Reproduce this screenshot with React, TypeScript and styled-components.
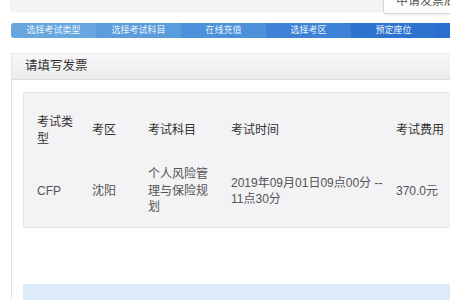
import React from "react"
import styled, { createGlobalStyle } from "styled-components"

const steps = [
  { label: "选择考试类型", color: "#67a6df" },
  { label: "选择考试科目", color: "#5a9cdc" },
  { label: "在线充值", color: "#4c90da" },
  { label: "选择考区", color: "#3d82d6" },
  { label: "预定座位", color: "#2f73d1" },
  { label: "", color: "#2b6ecf" },
]

export default function App() {
  return (
    <>
      <GlobalStyle />
      <Page>
        <TopStrip>
          <InvoiceButton>申请发票后</InvoiceButton>
        </TopStrip>
        <StepBar>
          {steps.map((s, i) => (
            <Step key={i} $color={s.color}>
              {s.label}
            </Step>
          ))}
        </StepBar>
        <Panel>
          <PanelHeader>请填写发票</PanelHeader>
          <PanelBody>
            <InfoBox>
              <Table>
                <colgroup>
                  <col style={{ width: 55 }} />
                  <col style={{ width: 56 }} />
                  <col style={{ width: 83 }} />
                  <col style={{ width: 165 }} />
                  <col />
                </colgroup>
                <thead>
                  <HeadRow>
                    <Th $pad={12}>考试类型</Th>
                    <Th>考区</Th>
                    <Th>考试科目</Th>
                    <Th>考试时间</Th>
                    <Th>考试费用</Th>
                  </HeadRow>
                </thead>
                <tbody>
                  <DataRow>
                    <Td $pad={12}>CFP</Td>
                    <Td>沈阳</Td>
                    <Td $pad={14}>个人风险管理与保险规划</Td>
                    <Td $pad={10}>2019年09月01日09点00分 -- 11点30分</Td>
                    <Td>370.0元</Td>
                  </DataRow>
                </tbody>
              </Table>
            </InfoBox>
            <NoticeBar />
          </PanelBody>
        </Panel>
      </Page>
    </>
  )
}

const GlobalStyle = createGlobalStyle`
  html, body {
    margin: 0;
    padding: 0;
    background: #ffffff;
    overflow: hidden;
  }
  body {
    font-family: "Liberation Sans", "Noto Sans CJK SC", sans-serif;
  }
`

const Page = styled.div`
  width: 520px;
  height: 300px;
  overflow: hidden;
`

const TopStrip = styled.div`
  position: relative;
  height: 12px;
  margin-left: 10px;
  background: #f4f4f4;
  border-bottom: 1px solid #f8f8f8;
`

const InvoiceButton = styled.div`
  position: absolute;
  left: 373px;
  top: -11px;
  width: 90px;
  height: 23px;
  padding-left: 12px;
  line-height: 23px;
  font-size: 12px;
  color: #555;
  background: #fff;
  border: 1px solid #d6d6d6;
  border-radius: 3px;
  box-shadow: 0 1px 2px rgba(0, 0, 0, 0.08);
`

const StepBar = styled.div`
  display: flex;
  height: 15px;
  margin: 10px 0 0 11px;
  border-radius: 3px;
  overflow: hidden;
`

const Step = styled.div<{ $color: string }>`
  flex: 0 0 85px;
  background: ${(p) => p.$color};
  color: #eaf3fc;
  font-size: 9px;
  line-height: 15px;
  text-align: center;
  white-space: nowrap;
`

const Panel = styled.div`
  margin: 15px 0 0 11px;
  width: 520px;
  height: 260px;
  border-left: 1px solid #e4e4e4;
  border-top: 1px solid #ededed;
`

const PanelHeader = styled.div`
  height: 25px;
  padding-left: 13px;
  line-height: 25px;
  font-size: 12.5px;
  color: #333;
  background: linear-gradient(#f7f7f7, #ececec);
  border-bottom: 1px solid #dcdcdc;
`

const PanelBody = styled.div`
  padding: 12px 0 0 11px;
`

const InfoBox = styled.div`
  background: #f3f2f4;
  border: 1px solid #e4e3e6;
  padding: 13px 0 0 13px;
`

const Table = styled.table`
  width: 480px;
  table-layout: fixed;
  border-collapse: collapse;
  font-size: 12px;
  line-height: 16.5px;
`

const HeadRow = styled.tr`
  height: 49px;
`

const DataRow = styled.tr`
  height: 72px;
`

const Th = styled.th<{ $pad?: number }>`
  padding: 0 ${(p) => p.$pad ?? 4}px 0 0;
  text-align: left;
  vertical-align: middle;
  font-weight: normal;
  color: #333;
`

const Td = styled.td<{ $pad?: number }>`
  padding: 0 ${(p) => p.$pad ?? 4}px 0 0;
  vertical-align: middle;
  color: #555;
`

const NoticeBar = styled.div`
  height: 20px;
  margin-top: 56px;
  background: #dcebf7;
`
